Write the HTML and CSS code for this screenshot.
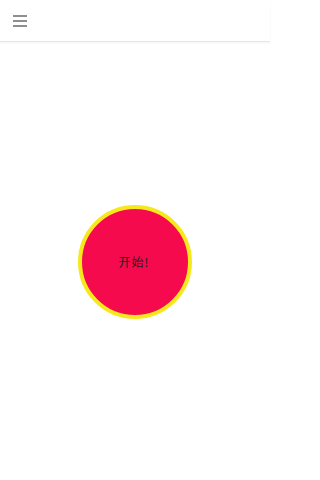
FILE: index.html
```html
<!DOCTYPE html>
<html lang="zh">
<head>
<meta charset="utf-8">
<link rel="stylesheet" href="styles.css">
</head>
<body>
<div class="app">
  <header class="bar">
    <button class="menu" aria-label="menu">
      <svg width="14" height="12" viewBox="0 0 14 12"><path d="M0 1h14M0 6h14M0 11h14" stroke="#6b6b6b" stroke-width="1.5" fill="none"/></svg>
    </button>
  </header>
  <main class="stage">
    <button class="start">开始!</button>
  </main>
</div>
</body>
</html>
```
FILE: styles.css
```css
html, body { margin: 0; padding: 0; background: #fff; }
body { font-family: "Noto Sans CJK SC", "Noto Sans", sans-serif; }
.app { display: flex; flex-direction: column; width: 270px; height: 480px; }
.bar {
  height: 41px;
  flex: 0 0 41px;
  display: flex;
  align-items: center;
  padding-left: 13px;
  border-bottom: 1px solid #e6e6e6;
  box-shadow: 0 1px 2px rgba(0,0,0,0.05);
}
.menu { border: 0; background: none; padding: 0; display: flex; margin-top: 1px; }
.stage { flex: 1; display: flex; align-items: center; justify-content: center; }
.start {
  width: 114px; height: 114px;
  box-sizing: border-box;
  border-radius: 50%;
  border: 4px solid #f5e91e;
  background: #f50a4e;
  color: #1e1e1e;
  font-family: "Noto Sans CJK SC", sans-serif;
  font-size: 12px;
  letter-spacing: 1px;
  padding: 0 2px 0 0;
  margin-top: 1px;
}
```
